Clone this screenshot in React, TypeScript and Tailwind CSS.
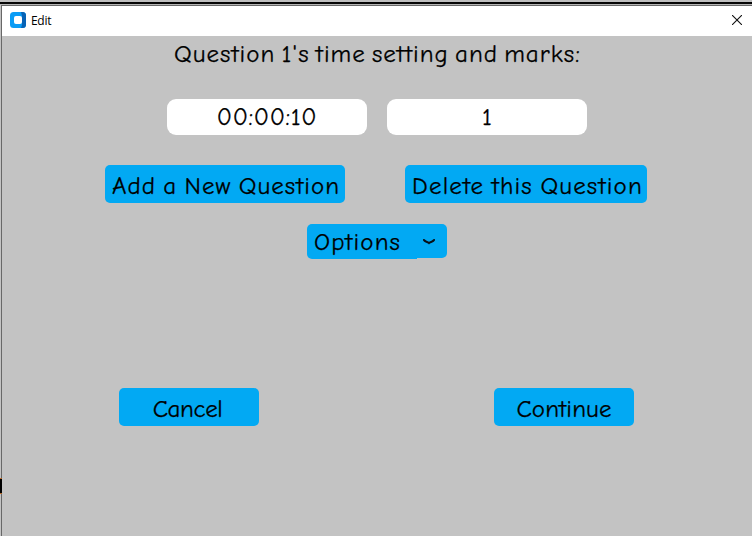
import React from "react";

const hand = "font-['Comic_Sans_MS','Comic_Neue',Lato,sans-serif] text-[25px] text-black whitespace-pre [-webkit-text-stroke:0.25px_black]";

function ActionButton({ label, className, textClass }: { label: string; className: string; textClass: string }) {
  return (
    <button className={`flex h-[38px] shrink-0 items-center justify-center rounded-[5px] bg-[#02a9f3] pt-1 leading-[34px] ${hand} ${className}`}>
      <span className={textClass}>{label}</span>
    </button>
  );
}

function Field({ value, textClass }: { value: string; textClass: string }) {
  return (
    <div className={`flex h-9 w-[200px] items-center justify-center rounded-[9px] bg-white leading-9 ${hand}`}>
      <span className={textClass}>{value}</span>
    </div>
  );
}

export default function App() {
  return (
    <div className="relative flex h-[536px] w-[752px] flex-col overflow-hidden bg-[#c3c3c3]">
      <div className="h-0.5 shrink-0 bg-[#bfbfbf]" />
      <div className="h-0.5 shrink-0 bg-[#050505]" />
      <div className="h-px shrink-0 bg-[#b4b4b4]" />
      <div className="ml-px flex min-h-0 grow flex-col border-l border-t border-[#686868]">
        <header className="flex h-[30px] shrink-0 items-center bg-white pl-2">
          <svg width="16" height="16" viewBox="0 0 16 16" className="-mt-0.5">
            <rect width="16" height="16" rx="3.5" fill="#0a9cf5" />
            <path d="M11 0h1.5A3.5 3.5 0 0 1 16 3.5v9a3.5 3.5 0 0 1-3.5 3.5H11l1-3V4z" fill="#0863b5" />
            <rect x="4" y="4" width="8" height="8" rx="2" fill="#fff" />
          </svg>
          <span className="ml-[5px] font-['Segoe_UI','Open_Sans',sans-serif] text-[12px] leading-4 tracking-[-0.3px] text-black">Edit</span>
          <svg width="10" height="10" viewBox="0 0 10 10" className="-mt-0.5 ml-auto mr-[10px]" stroke="#111" strokeWidth="1.1">
            <path d="M0 0l10 10M10 0l-10 10" />
          </svg>
        </header>
        <main className="flex grow flex-col">
          <h1 className={`ml-[172px] h-9 leading-9 ${hand}`}>
            <span className="tracking-[1px] [word-spacing:-3.2px]">Question 1's time setting and marks:</span>
          </h1>
          <div className="ml-[165px] mt-[27px] flex gap-5">
            <Field value="00:00:10" textClass="tracking-[0.65px]" />
            <Field value="1" textClass="" />
          </div>
          <div className="ml-[103px] mt-[30px] flex gap-[60px]">
            <ActionButton label="Add a New Question" className="w-[240px] pl-0.5" textClass="tracking-[1px] [word-spacing:-2px]" />
            <ActionButton label="Delete this Question" className="w-[242px] pl-[3px]" textClass="tracking-[1.15px] [word-spacing:-2px]" />
          </div>
          <div className="ml-[305px] mt-[21px] flex h-[35px] w-[140px]">
            <div className={`h-[35px] w-[110px] rounded-l-[5px] bg-[#02a9f3] pl-[7px] leading-[36px] ${hand}`}>
              <span className="tracking-[1.1px]">Options</span>
            </div>
            <div className="h-[34px] w-[30px] rounded-r-[5px] bg-[#02a9f3]">
              <svg width="14" height="8" viewBox="0 0 14 8" className="ml-[5px] mt-[14px]" fill="none" stroke="#071018" strokeWidth="2.1" strokeLinecap="round">
                <path d="M2 2C3 4 5 3.2 7 5C9 3.2 11 4 12 2" />
              </svg>
            </div>
          </div>
          <div className="ml-[117px] mt-[129px] flex gap-[235px]">
            <ActionButton label="Cancel" className="w-[140px] pr-[3px]" textClass="tracking-[-0.4px]" />
            <ActionButton label="Continue" className="w-[140px]" textClass="tracking-[0.1px]" />
          </div>
        </main>
      </div>
      <div className="absolute left-0 top-[478px] h-4 w-0.5 border-y border-[#b66a2c] bg-black" />
    </div>
  );
}
